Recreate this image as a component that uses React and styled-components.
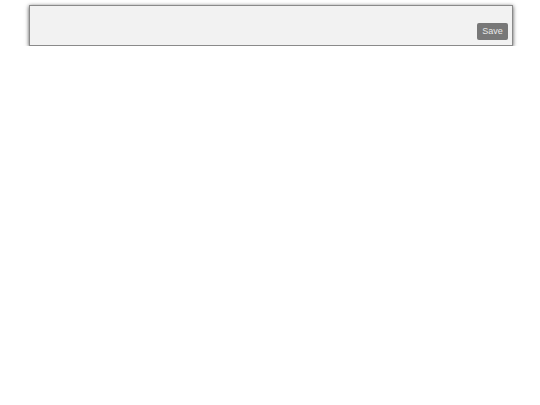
import React from "react";
import styled, { createGlobalStyle } from "styled-components";

const GlobalStyle = createGlobalStyle`
  body {
    margin: 0;
    background: #ffffff;
    font-family: "Liberation Sans", Arial, sans-serif;
  }
`;

const Page = styled.div`
  padding: 5px 27px 0 29px;
`;

const Toolbar = styled.div`
  box-sizing: border-box;
  height: 41px;
  display: flex;
  justify-content: flex-end;
  align-items: flex-end;
  padding: 0 4px 5px 0;
  background: #f2f2f2;
  border: 1px solid #8a8a8a;
  box-shadow: 0 1px 4px rgba(0, 0, 0, 0.7);
`;

const SaveButton = styled.button`
  height: 17px;
  width: 31px;
  padding: 0;
  border: none;
  border-radius: 2px;
  background: #787878;
  color: #e8e8e8;
  font-family: "Liberation Sans", Arial, sans-serif;
  font-size: 9px;
  line-height: 17px;
  cursor: pointer;
`;

function App() {
  return (
    <>
      <GlobalStyle />
      <Page>
        <Toolbar>
          <SaveButton>Save</SaveButton>
        </Toolbar>
      </Page>
    </>
  );
}

export default App;
